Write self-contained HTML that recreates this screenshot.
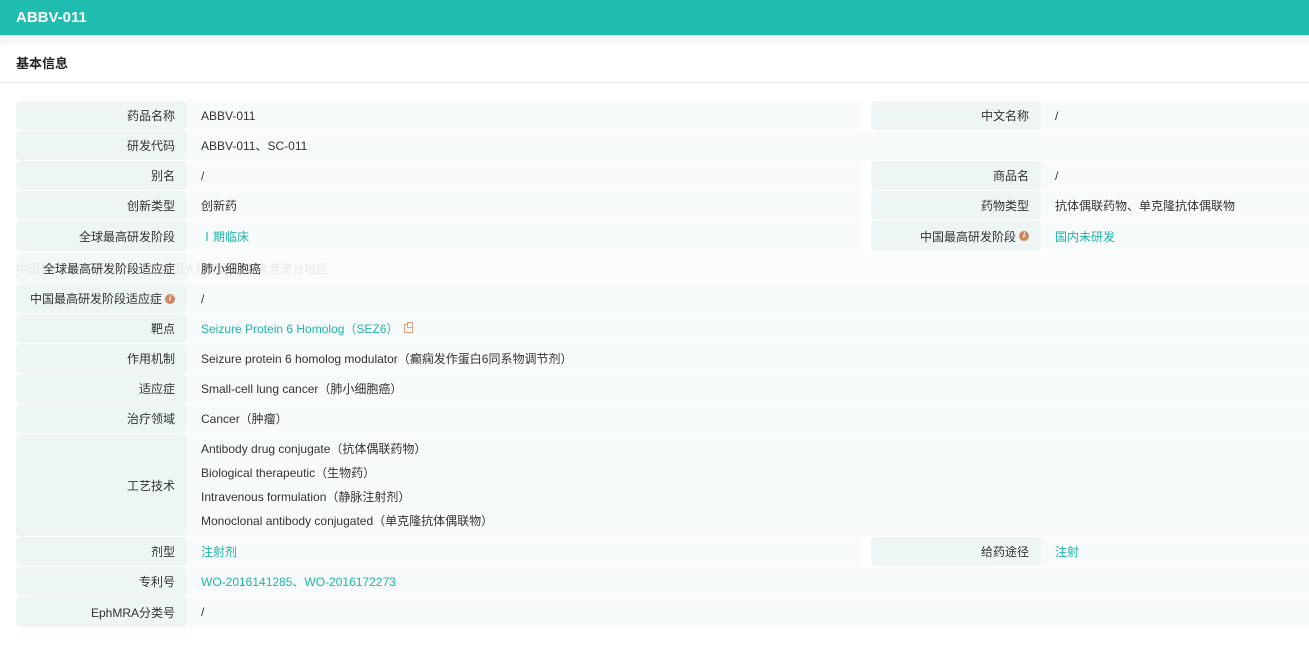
<!DOCTYPE html>
<html><head><meta charset="utf-8">
<style>
*{margin:0;padding:0;box-sizing:border-box}
body{width:1309px;height:642px;overflow:hidden;background:#f5f6f7;font-family:"Liberation Sans","Noto Sans CJK SC",sans-serif;font-size:12px;color:#333;position:relative}
.hdr{position:absolute;left:0;top:0;width:1309px;height:35px;background:#1fbcb0;color:#fff;font-weight:bold;font-size:15px;line-height:35px;padding-left:16px}
.card{position:absolute;left:0;top:43px;width:1309px;height:610px;background:#fff;border-radius:6px 0 0 0}
.title{position:absolute;left:16px;top:10px;font-weight:bold;font-size:13px;color:#222}
.line{position:absolute;left:0;top:39px;width:1309px;height:1px;background:#e6e8ea}
.r{position:absolute;left:16px;right:0;display:flex}
.l{width:171px;background:#eef5f5;border-radius:4px;text-align:right;padding-right:12px;display:flex;align-items:center;justify-content:flex-end;color:#333}
.v{flex:1;background:#f8fbfb;padding-left:14px;display:flex;align-items:center}
.half{width:674px;flex:none}
.gap{width:10px;background:#fff;flex:none}
.l2{width:170px}
.lk{color:#1fb5a8}
.i{display:inline-block;width:10px;height:10px;border-radius:50%;background:#d0855e;color:#fff;font-size:8px;line-height:10px;text-align:center;font-style:italic;font-weight:bold;margin-left:3px}
.multi{flex-direction:column;align-items:flex-start;justify-content:center}
.multi div{line-height:24px}
.ghost{position:absolute;left:16px;top:260px;color:#c8cccc;font-size:12px}
</style></head><body>
<div class="hdr">ABBV-011</div>
<div class="card">
<div class="title">基本信息</div>
<div class="line"></div>
</div>
<div class="r" style="top:101px;height:29px"><div class="l">药品名称</div><div class="v half">ABBV-011</div><div class="gap"></div><div class="l l2">中文名称</div><div class="v">/</div></div>
<div class="r" style="top:131px;height:29px"><div class="l">研发代码</div><div class="v">ABBV-011、SC-011</div></div>
<div class="r" style="top:161px;height:29px"><div class="l">别名</div><div class="v half">/</div><div class="gap"></div><div class="l l2">商品名</div><div class="v">/</div></div>
<div class="r" style="top:191px;height:29px"><div class="l">创新类型</div><div class="v half">创新药</div><div class="gap"></div><div class="l l2">药物类型</div><div class="v">抗体偶联药物、单克隆抗体偶联物</div></div>
<div class="r" style="top:221px;height:30px"><div class="l">全球最高研发阶段</div><div class="v half lk">Ⅰ期临床</div><div class="gap"></div><div class="l l2">中国最高研发阶段<span class="i">i</span></div><div class="v lk">国内未研发</div></div>
<div class="ghost">中国最高研发阶段适应症：中国大陆范围，不含港澳台地区</div>
<div class="r" style="top:253px;height:30px"><div class="l" style="background:rgba(238,245,245,.7)">全球最高研发阶段适应症</div><div class="v" style="background:rgba(248,251,251,.6)">肺小细胞癌</div></div>
<div class="r" style="top:284px;height:29px"><div class="l">中国最高研发阶段适应症<span class="i">i</span></div><div class="v">/</div></div>
<div class="r" style="top:314px;height:29px"><div class="l">靶点</div><div class="v lk">Seizure Protein 6 Homolog（SEZ6）<span style="display:inline-block;width:9px;height:9px;border:1px solid #e0a080;margin-left:6px;position:relative"><span style="position:absolute;left:2px;top:-3px;width:6px;height:6px;border:1px solid #e0a080;background:#f8fbfb"></span></span></div></div>
<div class="r" style="top:344px;height:29px"><div class="l">作用机制</div><div class="v">Seizure protein 6 homolog modulator（癫痫发作蛋白6同系物调节剂）</div></div>
<div class="r" style="top:374px;height:29px"><div class="l">适应症</div><div class="v">Small-cell lung cancer（肺小细胞癌）</div></div>
<div class="r" style="top:404px;height:29px"><div class="l">治疗领域</div><div class="v">Cancer（肿瘤）</div></div>
<div class="r" style="top:434px;height:102px"><div class="l">工艺技术</div><div class="v multi"><div>Antibody drug conjugate（抗体偶联药物）</div><div>Biological therapeutic（生物药）</div><div>Intravenous formulation（静脉注射剂）</div><div>Monoclonal antibody conjugated（单克隆抗体偶联物）</div></div></div>
<div class="r" style="top:537px;height:29px"><div class="l">剂型</div><div class="v half lk">注射剂</div><div class="gap"></div><div class="l l2">给药途径</div><div class="v lk">注射</div></div>
<div class="r" style="top:567px;height:29px"><div class="l">专利号</div><div class="v lk">WO-2016141285、WO-2016172273</div></div>
<div class="r" style="top:597px;height:30px"><div class="l">EphMRA分类号</div><div class="v">/</div></div>
</body></html>
